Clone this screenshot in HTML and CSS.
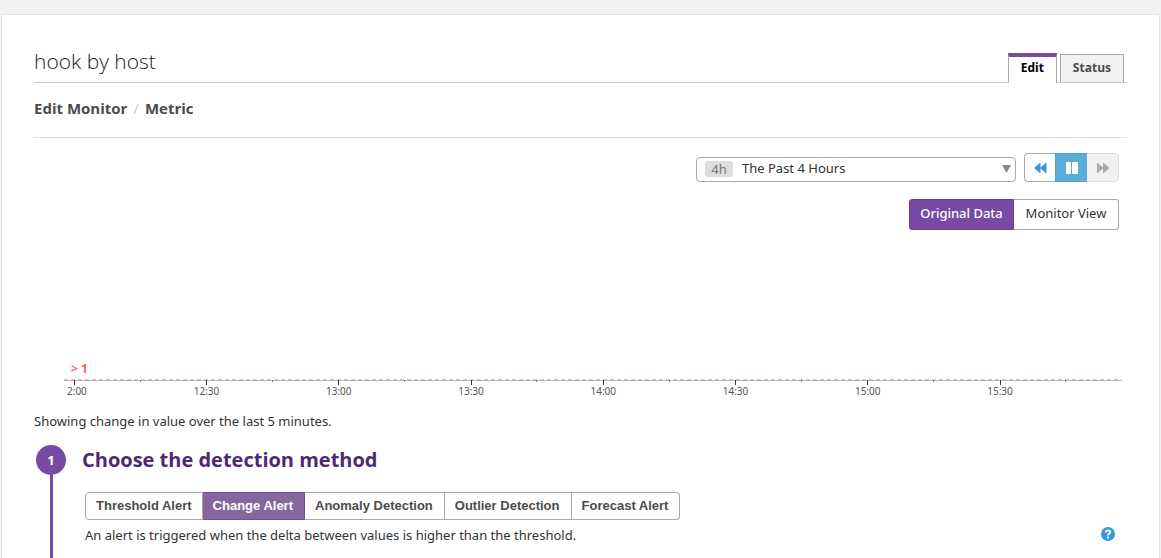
FILE: index.html
```html
<!DOCTYPE html>
<html lang="en">
<head>
<meta charset="utf-8">
<title>hook by host</title>
<link rel="stylesheet" href="styles.css">
</head>
<body>
<main class="card">
  <header class="head">
    <h1 class="title">hook by host</h1>
    <nav class="tabs">
      <a class="tab tab-active" href="#edit">Edit</a>
      <a class="tab" href="#status">Status</a>
    </nav>
  </header>
  <nav class="crumbs">
    <a href="#monitor">Edit Monitor</a><span class="slash">/</span><a href="#metric">Metric</a>
  </nav>
  <section class="toolbar">
    <div class="range">
      <span class="badge">4h</span>
      <select class="range-select" aria-label="Time range"><option>The Past 4 Hours</option></select>
      <svg class="caret" width="9" height="8" viewBox="0 0 9 8"><path d="M0 0h9L4.5 8z" fill="#888"/></svg>
    </div>
    <div class="player">
      <button class="play" aria-label="Back"><svg width="14" height="12" viewBox="0 0 14 12"><path d="M7.500 .5v11L1 6zM13.500 .5v11L7 6z" fill="#3598d4"/></svg></button>
      <button class="play play-on" aria-label="Pause"><svg width="14" height="12" viewBox="0 0 14 12"><path d="M1 0h5v12H1zM7 0h6v12H7z" fill="#fff"/></svg></button>
      <button class="play play-off" aria-label="Forward" disabled><svg width="14" height="12" viewBox="0 0 14 12"><path d="M1 .5v11L7.500 6zM7 .5v11L13.500 6z" fill="#aaa"/></svg></button>
    </div>
  </section>
  <div class="views">
    <button class="view view-on">Original Data</button><button class="view">Monitor View</button>
  </div>
  <svg class="chart" width="100%" height="169">
    <text class="limit" x="7" y="143">&gt; 1</text>
    <path class="axis" d="M0 150.500H4000"/>
    <path class="threshold" d="M0 149.500H4000"/>
    <g class="minor">
      <line x1="7.2%" x2="7.2%" y1="150" y2="152"/><line x1="19.7%" x2="19.7%" y1="150" y2="152"/><line x1="32.2%" x2="32.2%" y1="150" y2="152"/><line x1="44.7%" x2="44.7%" y1="150" y2="152"/><line x1="57.2%" x2="57.2%" y1="150" y2="152"/><line x1="69.7%" x2="69.7%" y1="150" y2="152"/><line x1="82.2%" x2="82.2%" y1="150" y2="152"/><line x1="94.7%" x2="94.7%" y1="150" y2="152"/>
    </g>
    <g class="major">
      <line x1="0.97%" x2="0.97%" y1="150" y2="155"/><line x1="13.47%" x2="13.47%" y1="150" y2="155"/><line x1="25.97%" x2="25.97%" y1="150" y2="155"/><line x1="38.47%" x2="38.47%" y1="150" y2="155"/><line x1="50.97%" x2="50.97%" y1="150" y2="155"/><line x1="63.47%" x2="63.47%" y1="150" y2="155"/><line x1="75.97%" x2="75.97%" y1="150" y2="155"/><line x1="88.47%" x2="88.47%" y1="150" y2="155"/>
    </g>
    <g class="hours">
      <text class="first" x="3" y="165">2:00</text><text x="13.47%" y="165">12:30</text><text x="25.97%" y="165">13:00</text><text x="38.47%" y="165">13:30</text><text x="50.97%" y="165">14:00</text><text x="63.47%" y="165">14:30</text><text x="75.97%" y="165">15:00</text><text x="88.47%" y="165">15:30</text>
    </g>
  </svg>
  <p class="note">Showing change in value over the last 5 minutes.</p>
  <section class="step">
    <div class="rail"><span class="num">1</span></div>
    <div class="step-body">
      <h2 class="step-title">Choose the detection method</h2>
      <div class="methods">
        <button class="method">Threshold Alert</button><button class="method method-on">Change Alert</button><button class="method">Anomaly Detection</button><button class="method">Outlier Detection</button><button class="method">Forecast Alert</button>
      </div>
      <div class="desc">
        <p>An alert is triggered when the delta between values is higher than the threshold.</p>
        <button class="help" aria-label="Help"><svg width="14" height="14" viewBox="0 0 14 14"><circle cx="7" cy="7" r="7" fill="#3598d4"/><path d="M4.800 5.400C4.900 2.700 9.200 2.700 9.200 5.200C9.200 6.800 7 6.700 7 8.600" fill="none" stroke="#fff" stroke-width="1.900"/><path d="M6 9.600h2v1.900H6z" fill="#fff"/></svg></button>
      </div>
    </div>
  </section>
</main>
</body>
</html>
```
FILE: styles.css
```css
* { box-sizing: border-box; }
body {
  margin: 0;
  padding: 14px 1px 0;
  background: #f2f2f2;
  color: #333;
  font: 13px/20px "Noto Sans", "Open Sans", sans-serif;
}
h1, h2, p { margin: 0; }
button, select { font: inherit; color: inherit; margin: 0; padding: 0; }
a { color: inherit; text-decoration: none; }
svg { display: block; }
.card {
  display: flex;
  flex-direction: column;
  min-height: calc(100vh - 14px);
  padding: 0 32px;
  background: #fff;
  border: 1px solid #e4e4e4;
  border-bottom: 0;
}
.head {
  display: flex;
  justify-content: space-between;
  align-items: flex-end;
  height: 68px;
  padding-right: 3px;
  border-bottom: 1px solid #c8c8c8;
}
.title {
  padding-bottom: 7px;
  font: 300 21px/28px "Open Sans", sans-serif;
  color: #222;
}
.tabs {
  display: flex;
  align-items: flex-end;
  gap: 3px;
  margin-bottom: -1px;
  font: bold 12px/18px "Open Sans", sans-serif;
}
.tab {
  padding: 4px 12px 5px;
  background: #f1f1f1;
  border: 1px solid #aaa;
  border-bottom-color: #c8c8c8;
  color: #4c4c4c;
}
.tab-active {
  padding: 2px 12px 6px;
  background: #fff;
  border-top: 4px solid #774aa4;
  border-bottom: 0;
  color: #000;
}
.crumbs {
  display: flex;
  gap: 6px;
  height: 55px;
  padding-top: 15px;
  border-bottom: 1px solid #e4e4e4;
  color: #4c4c4c;
  font: bold 15px/20px "Open Sans", sans-serif;
}
.slash { color: #ccc; font-weight: 400; }
.toolbar {
  display: flex;
  justify-content: flex-end;
  align-items: center;
  gap: 8px;
  padding: 15px 8px 0 0;
}
.range { position: relative; width: 320px; margin-top: 3px; }
.range-select {
  display: block;
  width: 100%;
  height: 25px;
  padding: 0 0 2px 45px;
  appearance: none;
  background: #fff;
  border: 1px solid #aaa;
  border-radius: 4px;
}
.badge {
  position: absolute;
  left: 9px;
  top: 4px;
  width: 28px;
  background: #ddd;
  border-radius: 3px;
  color: #777;
  line-height: 16px;
  text-align: center;
}
.caret { position: absolute; right: 5px; top: 8px; pointer-events: none; }
.player { display: flex; }
.play {
  display: grid;
  place-items: center;
  width: 31px;
  height: 29px;
  background: #fff;
  border: 1px solid #aaa;
  border-right: 0;
  border-radius: 4px 0 0 4px;
}
.play-on { width: 32px; background: #5cacd8; border-color: #4fa3d1; border-radius: 0; }
.play-off {
  width: 32px;
  background: #f1f1f1;
  border: 1px solid #ddd;
  border-left: 0;
  border-radius: 0 4px 4px 0;
}
.views { display: flex; justify-content: flex-end; padding: 17px 8px 0 0; }
.view {
  width: 105px;
  height: 31px;
  padding-bottom: 4px;
  background: #fff;
  border: 1px solid #aaa;
  border-left: 0;
  border-radius: 0 3px 3px 0;
}
.view-on {
  background: #774aa4;
  border: 1px solid #68408f;
  border-radius: 3px 0 0 3px;
  color: #fff;
  font-weight: 500;
}
.chart { width: auto; margin: 0 5px 0 30px; }
.limit { fill: #fa6464; font-size: 12px; font-weight: 700; }
.axis { stroke: #bbb; fill: none; }
.threshold { stroke: #f0b4b4; stroke-dasharray: 4 3; fill: none; }
.major { stroke: #333; shape-rendering: crispEdges; }
.minor { stroke: #777; shape-rendering: crispEdges; }
.hours { fill: #555; font-size: 10px; text-anchor: middle; }
.first { text-anchor: start; }
.note { padding: 12px 0 14px; }
.step { display: flex; flex: 1; gap: 16px; padding-left: 2px; }
.rail { display: flex; flex-direction: column; align-items: center; width: 30px; }
.rail::after { content: ""; flex: 1; width: 3px; background: #774aa4; }
.num {
  width: 30px;
  background: #774aa4;
  border-radius: 50%;
  color: #fff;
  font: bold 13px/30px "Open Sans", sans-serif;
  text-align: center;
}
.step-body { flex: 1; }
.step-title { color: #4d2a72; font: bold 20px/30px "Open Sans", sans-serif; }
.methods { display: flex; padding: 17px 0 5px 3px; }
.method {
  height: 28px;
  padding: 0 10px 1px;
  background: #fff;
  border: 1px solid #aaa;
  border-left: 0;
  color: #4c4c4c;
  font: bold 13px/20px "Liberation Sans", sans-serif;
}
.method + .method { padding-right: 11px; }
.method:first-child { border-left: 1px solid #aaa; border-radius: 4px 0 0 4px; }
.method:last-child { border-radius: 0 4px 4px 0; }
.method-on { background: #85679e; border-color: #774aa4; color: #fff; }
.desc { display: flex; justify-content: space-between; padding: 0 12px 0 3px; }
.help { align-self: flex-start; padding-top: 2px; background: none; border: 0; }
```
